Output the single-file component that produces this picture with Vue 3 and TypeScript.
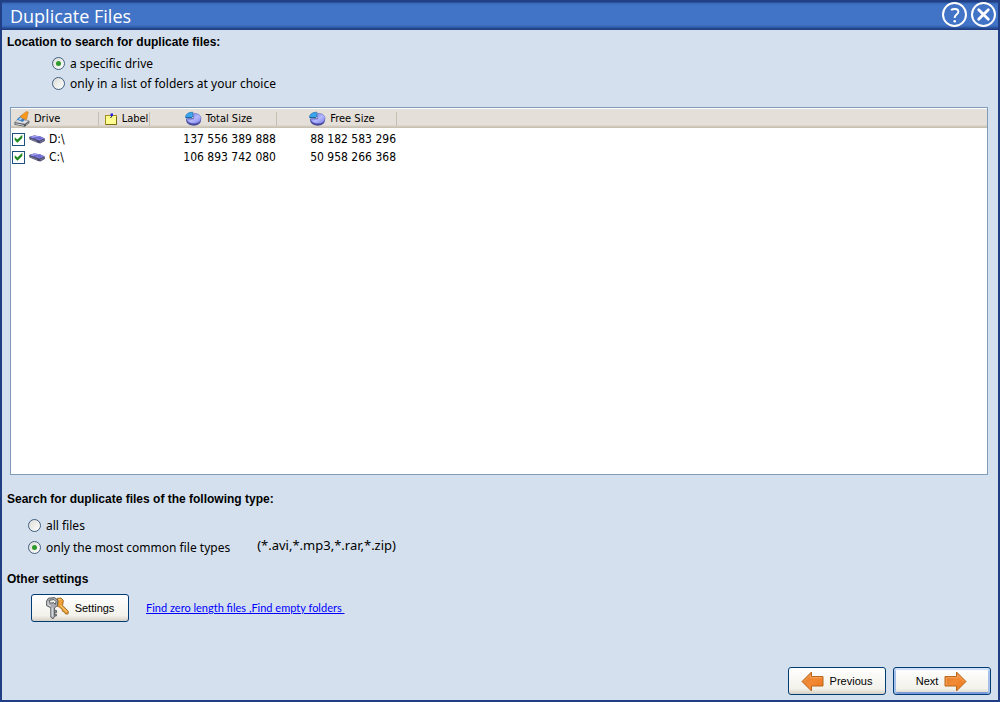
<script setup lang="ts">
import { ref } from 'vue'

interface Drive {
  name: string
  label: string
  total: string
  free: string
  checked: boolean
}

const location = ref<'drive' | 'folders'>('drive')
const fileType = ref<'all' | 'common'>('common')
const drives = ref<Drive[]>([
  { name: 'D:\\', label: '', total: '137 556 389 888', free: '88 182 583 296', checked: true },
  { name: 'C:\\', label: '', total: '106 893 742 080', free: '50 958 266 368', checked: true },
])
</script>

<template>
  <main class="window">
    <svg class="defs" width="0" height="0" aria-hidden="true">
      <defs>
        <linearGradient id="orange" x1="0" y1="0" x2="1" y2="1">
          <stop offset="0" stop-color="#d97b2c" />
          <stop offset="0.5" stop-color="#f48a35" />
          <stop offset="1" stop-color="#e87417" />
        </linearGradient>
        <linearGradient id="pie" x1="0" y1="0" x2="1" y2="1">
          <stop offset="0" stop-color="#6f74e6" />
          <stop offset="0.55" stop-color="#b4b8ff" />
          <stop offset="1" stop-color="#7a7ee0" />
        </linearGradient>
      </defs>
    </svg>

    <header class="titlebar">
      <h1>Duplicate Files</h1>
      <div class="title-actions">
        <button type="button" class="round" aria-label="Help">
          <svg width="26" height="26" viewBox="0 0 26 26" fill="none" stroke="#fff">
            <circle cx="12.5" cy="12.5" r="11.5" stroke-width="2" />
            <path d="M9 8.1 C10.5 6.9 16.4 5.7 16.4 9.7 C16.4 12.5 12.7 12.3 12.7 16.1" stroke-width="1.9" />
            <circle cx="12.7" cy="19.3" r="1.3" fill="#fff" stroke="none" />
          </svg>
        </button>
        <button type="button" class="round" aria-label="Close">
          <svg width="26" height="26" viewBox="0 0 26 26" fill="none" stroke="#fff">
            <circle cx="12.5" cy="12.5" r="11.5" stroke-width="2" />
            <path d="M7.7 7.7 L17.3 17.3 M17.3 7.7 L7.7 17.3" stroke-width="2.8" stroke-linecap="round" />
          </svg>
        </button>
      </div>
    </header>

    <div class="body">
      <h2>Location to search for duplicate files:</h2>
      <div class="options inset" role="radiogroup">
        <label><input v-model="location" type="radio" name="location" value="drive" /><span>a specific drive</span></label>
        <label><input v-model="location" type="radio" name="location" value="folders" /><span>only in a list of folders at your choice</span></label>
      </div>

      <div class="list">
        <table>
          <colgroup>
            <col class="c-drive" /><col class="c-label" /><col class="c-total" /><col class="c-free" /><col />
          </colgroup>
          <thead>
            <tr>
              <th>
                <span class="head">
                  <svg width="16" height="16" viewBox="0 0 16 16">
                    <path d="M0.5 11.2 L4 8.5 L15 9.6 L10.8 13.2 Z" fill="#dfe0e2" stroke="#8d9099" stroke-width="0.7" />
                    <path d="M0.5 11.2 L10.8 13 L15.4 9.8 V12 L10.8 15.8 L0.5 13.8 Z" fill="#55585d" />
                    <path d="M1.5 12.7 L9.8 14.4" stroke="#d5d8dc" stroke-width="1" />
                    <path d="M12 13.8 L14.6 11.8" stroke="#b9bcc0" stroke-width="0.8" />
                    <path d="M2.6 8.4 L7 4.6 L11.6 7.2 L8.8 11 Z" fill="#3c7fc4" />
                    <path d="M4.4 8.2 L7.4 5.8 L9 6.8 L6.6 9.2 Z" fill="#9fd0f2" />
                    <path d="M6 5.6 L12.4 0.4 L14.2 1 L12.6 8.6 L9.6 8 Z" fill="#f5991f" stroke="#c46d10" stroke-width="0.5" />
                  </svg>Drive
                </span>
              </th>
              <th>
                <span class="head">
                  <svg width="14" height="14" viewBox="0 0 14 14">
                    <rect x="1.5" y="3.5" width="11" height="9" fill="#ffff91" stroke="#a58d1f" />
                    <path d="M2 12.5 H12.5 V5" fill="none" stroke="#7d6c14" />
                    <path d="M6.5 6 L8 4" stroke="#222" />
                    <rect x="6.5" y="1.5" width="2.5" height="2.5" fill="#1d22e8" />
                  </svg>Label
                </span>
              </th>
              <th class="wide">
                <span class="head">
                  <svg width="17" height="16" viewBox="0 0 17 16">
                    <path d="M1.2 7.8 V10 C2.5 16 15 16.6 16 9.6 V7 Z" fill="#464a98" />
                    <path d="M1.2 8 H8.6 V2.4 C13 2.2 16 4.4 16 7.4 C16 14 3 14.4 1.2 8 Z" fill="url(#pie)" stroke="#5c61c4" stroke-width="0.6" />
                    <path d="M0.4 6.6 C0.6 3 3.6 1.2 7.8 1.2 V5.4 L6.6 6.6 Z" fill="#3ba6ea" stroke="#1d70b5" stroke-width="0.7" />
                    <path d="M1 6.6 H6.6 L7.8 5.4" fill="none" stroke="#155a98" stroke-width="0.9" />
                  </svg>Total Size
                </span>
              </th>
              <th class="wide">
                <span class="head">
                  <svg width="17" height="16" viewBox="0 0 17 16">
                    <path d="M1.2 7.8 V10 C2.5 16 15 16.6 16 9.6 V7 Z" fill="#464a98" />
                    <path d="M1.2 8 H8.6 V2.4 C13 2.2 16 4.4 16 7.4 C16 14 3 14.4 1.2 8 Z" fill="url(#pie)" stroke="#5c61c4" stroke-width="0.6" />
                    <path d="M0.4 6.6 C0.6 3 3.6 1.2 7.8 1.2 V5.4 L6.6 6.6 Z" fill="#3ba6ea" stroke="#1d70b5" stroke-width="0.7" />
                    <path d="M1 6.6 H6.6 L7.8 5.4" fill="none" stroke="#155a98" stroke-width="0.9" />
                  </svg>Free Size
                </span>
              </th>
              <td class="filler"></td>
            </tr>
          </thead>
          <tbody>
            <tr v-for="drive in drives" :key="drive.name">
              <td>
                <label class="drive">
                  <input v-model="drive.checked" type="checkbox" />
                  <svg width="16" height="9" viewBox="0 0 16 9">
                    <path d="M0 2 L5 0.4 L11 1.2 L15.8 3.4 V6 L11.4 8.6 L9 8 L0.6 4.4 Z" fill="#4a4a6c" />
                    <path d="M0.2 2 L5 0.4 L11 1.2 L15.6 3.6 L10.4 5.6 Z" fill="#7f7de4" />
                    <path d="M2.6 2.2 L6 1.3 L9.6 2.2" fill="none" stroke="#b1b0f6" stroke-width="0.8" />
                    <path d="M5 3.4 L8.6 2.6 L12 3.6" fill="none" stroke="#5553a8" stroke-width="0.8" />
                    <path d="M11 7.2 L14.8 5.2 M1.5 4 L8 6.6" stroke="#8f8da8" stroke-width="0.8" />
                  </svg>
                  <span>{{ drive.name }}</span>
                </label>
              </td>
              <td>{{ drive.label }}</td>
              <td class="num">{{ drive.total }}</td>
              <td class="num">{{ drive.free }}</td>
              <td></td>
            </tr>
          </tbody>
        </table>
      </div>

      <h2>Search for duplicate files of the following type:</h2>
      <div class="types">
        <div class="options" role="radiogroup">
          <label><input v-model="fileType" type="radio" name="type" value="all" /><span>all files</span></label>
          <label><input v-model="fileType" type="radio" name="type" value="common" /><span>only the most common file types</span></label>
        </div>
        <span class="masks">(*.avi,*.mp3,*.rar,*.zip)</span>
      </div>

      <h2>Other settings</h2>
      <div class="settings">
        <button type="button" class="btn">
          <svg width="24" height="24" viewBox="0 0 24 24">
            <path d="M12 2.4 L16 2 L18.4 4.4 L17.6 9.4 L23.4 15.4 L23 18 L20.6 18 L19.4 16 L17.6 15.4 L17 13.2 L14.6 11.2 L12 10 Z" fill="#f0a032" stroke="#8f5a1a" stroke-width="0.8" />
            <path d="M15.4 9.4 L21.8 16 M13.4 3.8 L15.8 3.6" stroke="#ffd488" stroke-width="1" />
            <path d="M3.4 2.2 L9.6 1.6 L13 4.4 L12.6 9.4 L9.6 11.8 V20.6 L7.8 23 L5.8 21 V11.8 L1.6 9.6 V5 Z" fill="#a9adb2" stroke="#4d5156" stroke-width="0.9" />
            <path d="M4.2 4.4 L9 3.6 L11 5.6 L10.4 8.4 L8.6 6.6 L5.2 7.2 Z" fill="#f8f7ef" stroke="#4d5156" stroke-width="0.9" />
            <path d="M3 5.5 V8.8 L6 10.2" fill="none" stroke="#e4e6e8" stroke-width="0.9" />
            <path d="M7.2 11.5 V20.6" stroke="#e6e8ea" stroke-width="1.1" />
            <path d="M9.4 14.6 H11.6 V16.6 H9.4 M9.4 18.2 H11.4 V20 H9.4" fill="#8b8e93" stroke="#4d5156" stroke-width="0.8" />
          </svg>Settings
        </button>
        <a href="#">Find zero length files ,Find empty folders&nbsp;</a>
      </div>

      <footer class="nav">
        <button type="button" class="btn">
          <svg width="23" height="21" viewBox="0 0 23 21">
            <path d="M1 10.5 L10.5 1 V5.5 H22 V15 H10.5 V20 Z" fill="url(#orange)" stroke="#b8691f" />
            <path d="M3 10.5 L9.5 4 V6.7 H20.8" fill="none" stroke="#f7a862" stroke-width="0.8" />
          </svg>Previous
        </button>
        <button type="button" class="btn default">
          Next<svg width="23" height="21" viewBox="0 0 23 21">
            <path d="M22 10.5 L12.5 1 V5.5 H1 V15 H12.5 V20 Z" fill="url(#orange)" stroke="#b8691f" />
            <path d="M2.3 14 V6.7 H13.6 V4 L20 10.5" fill="none" stroke="#f7a862" stroke-width="0.8" />
          </svg>
        </button>
      </footer>
    </div>
  </main>
</template>

<style>
body {
  margin: 0;
}
</style>

<style scoped>
.window {
  box-sizing: border-box;
  min-height: 100vh;
  display: flex;
  flex-direction: column;
  border: solid #213f84;
  border-width: 0 2px 2px;
  background: #d5e0ee;
  color: #000;
  font-family: "Noto Sans", "DejaVu Sans Condensed", sans-serif;
  font-size: 12px;
  line-height: 20px;
}
.defs {
  position: absolute;
}
.titlebar {
  box-sizing: border-box;
  height: 30px;
  display: flex;
  align-items: center;
  justify-content: space-between;
  padding: 0 1px 0 8px;
  background: linear-gradient(#213f84 0, #213f84 2px, #3566b5 3px, #4173c6 5px, #4173c6 25px, #3260ae 27px, #213f84 29px);
}
h1 {
  margin: 0;
  padding-top: 1px;
  color: #fff;
  font: 400 18px/24px "Open Sans", "Noto Sans", sans-serif;
}
.title-actions {
  display: flex;
  gap: 3px;
}
.round {
  display: block;
  width: 26px;
  height: 26px;
  padding: 0;
  border: 0;
  background: none;
}
.round svg {
  display: block;
}
.body {
  flex: 1;
  display: flex;
  flex-direction: column;
  padding: 4px 5px 5px;
}
h2 {
  margin: 0;
  font: 700 12px/16px "Liberation Sans", Arial, sans-serif;
}
.options {
  display: flex;
  flex-direction: column;
  align-items: flex-start;
  gap: 2px;
}
.options.inset {
  margin: 3px 0 14px 45px;
  gap: 0;
}
.options label {
  display: flex;
  align-items: center;
  gap: 5px;
  height: 20px;
}
.options span {
  padding-top: 2px;
}
input {
  appearance: none;
  flex: none;
  box-sizing: border-box;
  width: 13px;
  height: 13px;
  margin: 0;
  display: grid;
  place-items: center;
  border: 1px solid #1c5180;
  background: linear-gradient(135deg, #dcdcd7, #fff);
}
input[type="radio"] {
  border-color: #3f5f80;
  border-radius: 50%;
}
input[type="radio"]:checked::before {
  content: "";
  width: 5px;
  height: 5px;
  border-radius: 50%;
  background: #2f9a2c;
}
input[type="checkbox"] {
  background: #fff;
}
input[type="checkbox"]:checked::before {
  content: "";
  width: 9px;
  height: 9px;
  background: #1f8a1f;
  clip-path: polygon(8% 30%, 38% 56%, 92% 4%, 92% 38%, 38% 92%, 8% 62%);
}
.list {
  flex: 1;
  margin: 0 5px 16px 3px;
  border: 1px solid #7f9db9;
  background: #fff;
}
table {
  width: 100%;
  table-layout: fixed;
  border-collapse: separate;
  border-spacing: 0;
}
.c-drive {
  width: 88px;
}
.c-label {
  width: 51px;
}
.c-total {
  width: 127px;
}
.c-free {
  width: 120px;
}
th,
td {
  padding: 0;
  white-space: nowrap;
}
th,
.filler {
  height: 20px;
  background: linear-gradient(#fff 0, #fff 1px, #e4dfd8 1px, #e4dfd8 17px, #d6d0c5 18px, #c2bbad 20px);
}
th {
  padding-top: 2px;
  height: 18px;
}
.head {
  display: flex;
  align-items: center;
  justify-content: center;
  gap: 4px;
  height: 14px;
  border-right: 1px solid #c4c0b4;
  font-family: "DejaVu Sans Condensed", "DejaVu Sans", sans-serif;
  font-size: 11px;
  font-weight: 400;
  line-height: 14px;
}
th:first-child .head {
  justify-content: flex-start;
  padding-left: 3px;
}
th:nth-child(2) .head {
  padding-left: 4px;
}
.wide .head {
  padding-left: 11px;
}
tbody td {
  height: 18px;
  font-family: "DejaVu Sans Condensed", "DejaVu Sans", sans-serif;
  line-height: 18px;
}
tbody tr:first-child td {
  padding-top: 2px;
}
.drive {
  display: flex;
  align-items: center;
  gap: 4px;
  padding-left: 1px;
}
.num {
  padding-right: 1px;
  text-align: right;
}
.types {
  display: flex;
  align-items: flex-end;
  gap: 27px;
  margin: 8px 0 14px 21px;
}
.masks {
  font-size: 13px;
  line-height: 24px;
}
.settings {
  display: flex;
  align-items: center;
  gap: 17px;
  margin: 7px 0 45px 24px;
}
.btn {
  box-sizing: border-box;
  width: 98px;
  height: 28px;
  display: flex;
  align-items: center;
  justify-content: center;
  gap: 6px;
  padding: 0 1px 0 0;
  border: 1px solid #003c74;
  border-radius: 3px;
  background: linear-gradient(#fff, #f2f1ea 80%, #d6d0c5);
  color: #000;
  font: 11px/14px "Liberation Sans", Arial, sans-serif;
}
.btn.default {
  box-shadow: inset 0 2px 1px #cee0f8, inset 2px 0 0 #a5bfea, inset -2px 0 0 #a5bfea, inset 0 -2px 0 #7a9bdb;
}
.settings a {
  color: #00f;
  font: 11px/14px Lato, "Liberation Sans", sans-serif;
}
.nav {
  display: flex;
  justify-content: flex-end;
  gap: 7px;
  padding-right: 2px;
}
</style>
